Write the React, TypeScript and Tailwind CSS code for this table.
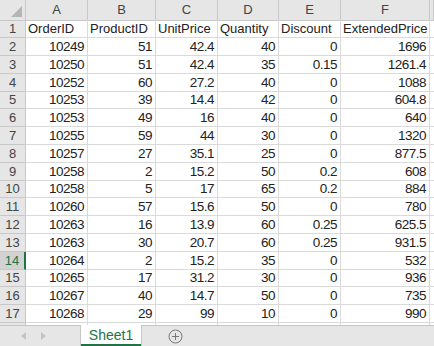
const headers = ["OrderID", "ProductID", "UnitPrice", "Quantity", "Discount", "ExtendedPrice"];

const rows: (string | number)[][] = [
  [10249, 51, 42.4, 40, 0, 1696],
  [10250, 51, 42.4, 35, 0.15, 1261.4],
  [10252, 60, 27.2, 40, 0, 1088],
  [10253, 39, 14.4, 42, 0, 604.8],
  [10253, 49, 16, 40, 0, 640],
  [10255, 59, 44, 30, 0, 1320],
  [10257, 27, 35.1, 25, 0, 877.5],
  [10258, 2, 15.2, 50, 0.2, 608],
  [10258, 5, 17, 65, 0.2, 884],
  [10260, 57, 15.6, 50, 0, 780],
  [10263, 16, 13.9, 60, 0.25, 625.5],
  [10263, 30, 20.7, 60, 0.25, 931.5],
  [10264, 2, 15.2, 35, 0, 532],
  [10265, 17, 31.2, 30, 0, 936],
  [10267, 40, 14.7, 50, 0, 735],
  [10268, 29, 99, 10, 0, 990],
];

const letters = ["A", "B", "C", "D", "E", "F", ""];
const cols = "grid-cols-[26px_62px_68px_62px_61px_62px_89px_1fr]";
const num = "font-['Liberation_Sans',Arial,sans-serif] text-[13.5px] tracking-[-0.5px]";
const txt = "font-['Liberation_Sans',Arial,sans-serif] text-[13px]";

function RowHeader({ n, selected }: { n: number; selected?: boolean }) {
  return (
    <div
      className={
        selected
          ? `flex items-end justify-center leading-none border-b border-[#c8c8c8] border-r-2 border-r-[#217346] bg-[#d2d2d2] text-[#217346] ${txt}`
          : `flex items-end justify-center leading-none border-b border-r border-[#c8c8c8] bg-[#e6e6e6] text-[#444] ${txt}`
      }
    >
      <span className="pb-[2px]">{n}</span>
    </div>
  );
}

export default function App() {
  return (
    <div className="w-[434px] h-[346px] overflow-hidden bg-white flex flex-col text-[#222]">
      <div className="flex-1 overflow-hidden">
        {/* column headers */}
        <div className={`grid ${cols} h-[20px]`}>
          <div className="relative bg-[#e6e6e6] border-r border-b border-[#c8c8c8]">
            <svg className="absolute right-[3px] bottom-[3px]" width="11" height="11" viewBox="0 0 11 11">
              <polygon points="11,0 11,11 0,11" fill="#b5b5b5" />
            </svg>
          </div>
          {letters.map((l, i) => (
            <div
              key={i}
              className={`flex items-center justify-center bg-[#e6e6e6] border-r border-b border-[#c8c8c8] text-[#444] ${txt}`}
            >
              {l}
            </div>
          ))}
        </div>

        {/* header row */}
        <div className={`grid ${cols} h-[18px]`}>
          <RowHeader n={1} />
          {headers.map((h) => (
            <div key={h} className={`flex items-end pl-[2px] leading-none border-r border-b border-[#dadada] ${txt}`}>
              <span className="pb-[2px] whitespace-nowrap">{h}</span>
            </div>
          ))}
          <div className="border-b border-[#dadada]" />
        </div>

        {rows.map((r, i) => (
          <div
            key={i}
            className={`grid ${cols} ${i === 3 || i === 8 || i === 13 ? "h-[17px]" : "h-[18px]"}`}
          >
            <RowHeader n={i + 2} selected={i === 12} />
            {r.map((v, j) => (
              <div
                key={j}
                className={`flex items-end justify-end pr-[3px] leading-none border-r border-b border-[#dadada] ${num}`}
              >
                <span className="pb-[2px]">{v}</span>
              </div>
            ))}
            <div className="border-b border-[#dadada]" />
          </div>
        ))}

        <div className={`grid ${cols} h-[18px]`}>
          <div className="bg-[#e6e6e6] border-r border-[#c8c8c8]" />
          {letters.slice(0, 6).map((l) => (
            <div key={l} className="border-r border-[#dadada]" />
          ))}
          <div />
        </div>
      </div>

      {/* sheet tab bar */}
      <div className="h-[21px] shrink-0 flex bg-[#e6e6e6] border-t border-[#c6c6c6]">
        <div className="w-[80px] flex items-center gap-[15px] pl-[21px]">
          <svg width="5" height="8" viewBox="0 0 5 8">
            <polygon points="5,0 5,8 0,4" fill="#c4c4c4" />
          </svg>
          <svg width="5" height="8" viewBox="0 0 5 8">
            <polygon points="0,0 0,8 5,4" fill="#c4c4c4" />
          </svg>
        </div>
        <div className="relative -mt-px w-[62px] bg-white border-x border-[#c6c6c6] flex items-center justify-center">
          <span className={`text-[#217346] ${txt} text-[14px] leading-none pb-[2px]`}>Sheet1</span>
          <div className="absolute left-0 right-0 bottom-0 h-[2px] bg-[#217346]" />
        </div>
        <div className="w-[66px] flex items-center justify-center">
          <svg width="15" height="15" viewBox="0 0 15 15">
            <circle cx="7.5" cy="7.5" r="6.5" fill="none" stroke="#777" strokeWidth="1" />
            <line x1="7.5" y1="4" x2="7.5" y2="11" stroke="#777" strokeWidth="1" />
            <line x1="4" y1="7.5" x2="11" y2="7.5" stroke="#777" strokeWidth="1" />
          </svg>
        </div>
      </div>
    </div>
  );
}
